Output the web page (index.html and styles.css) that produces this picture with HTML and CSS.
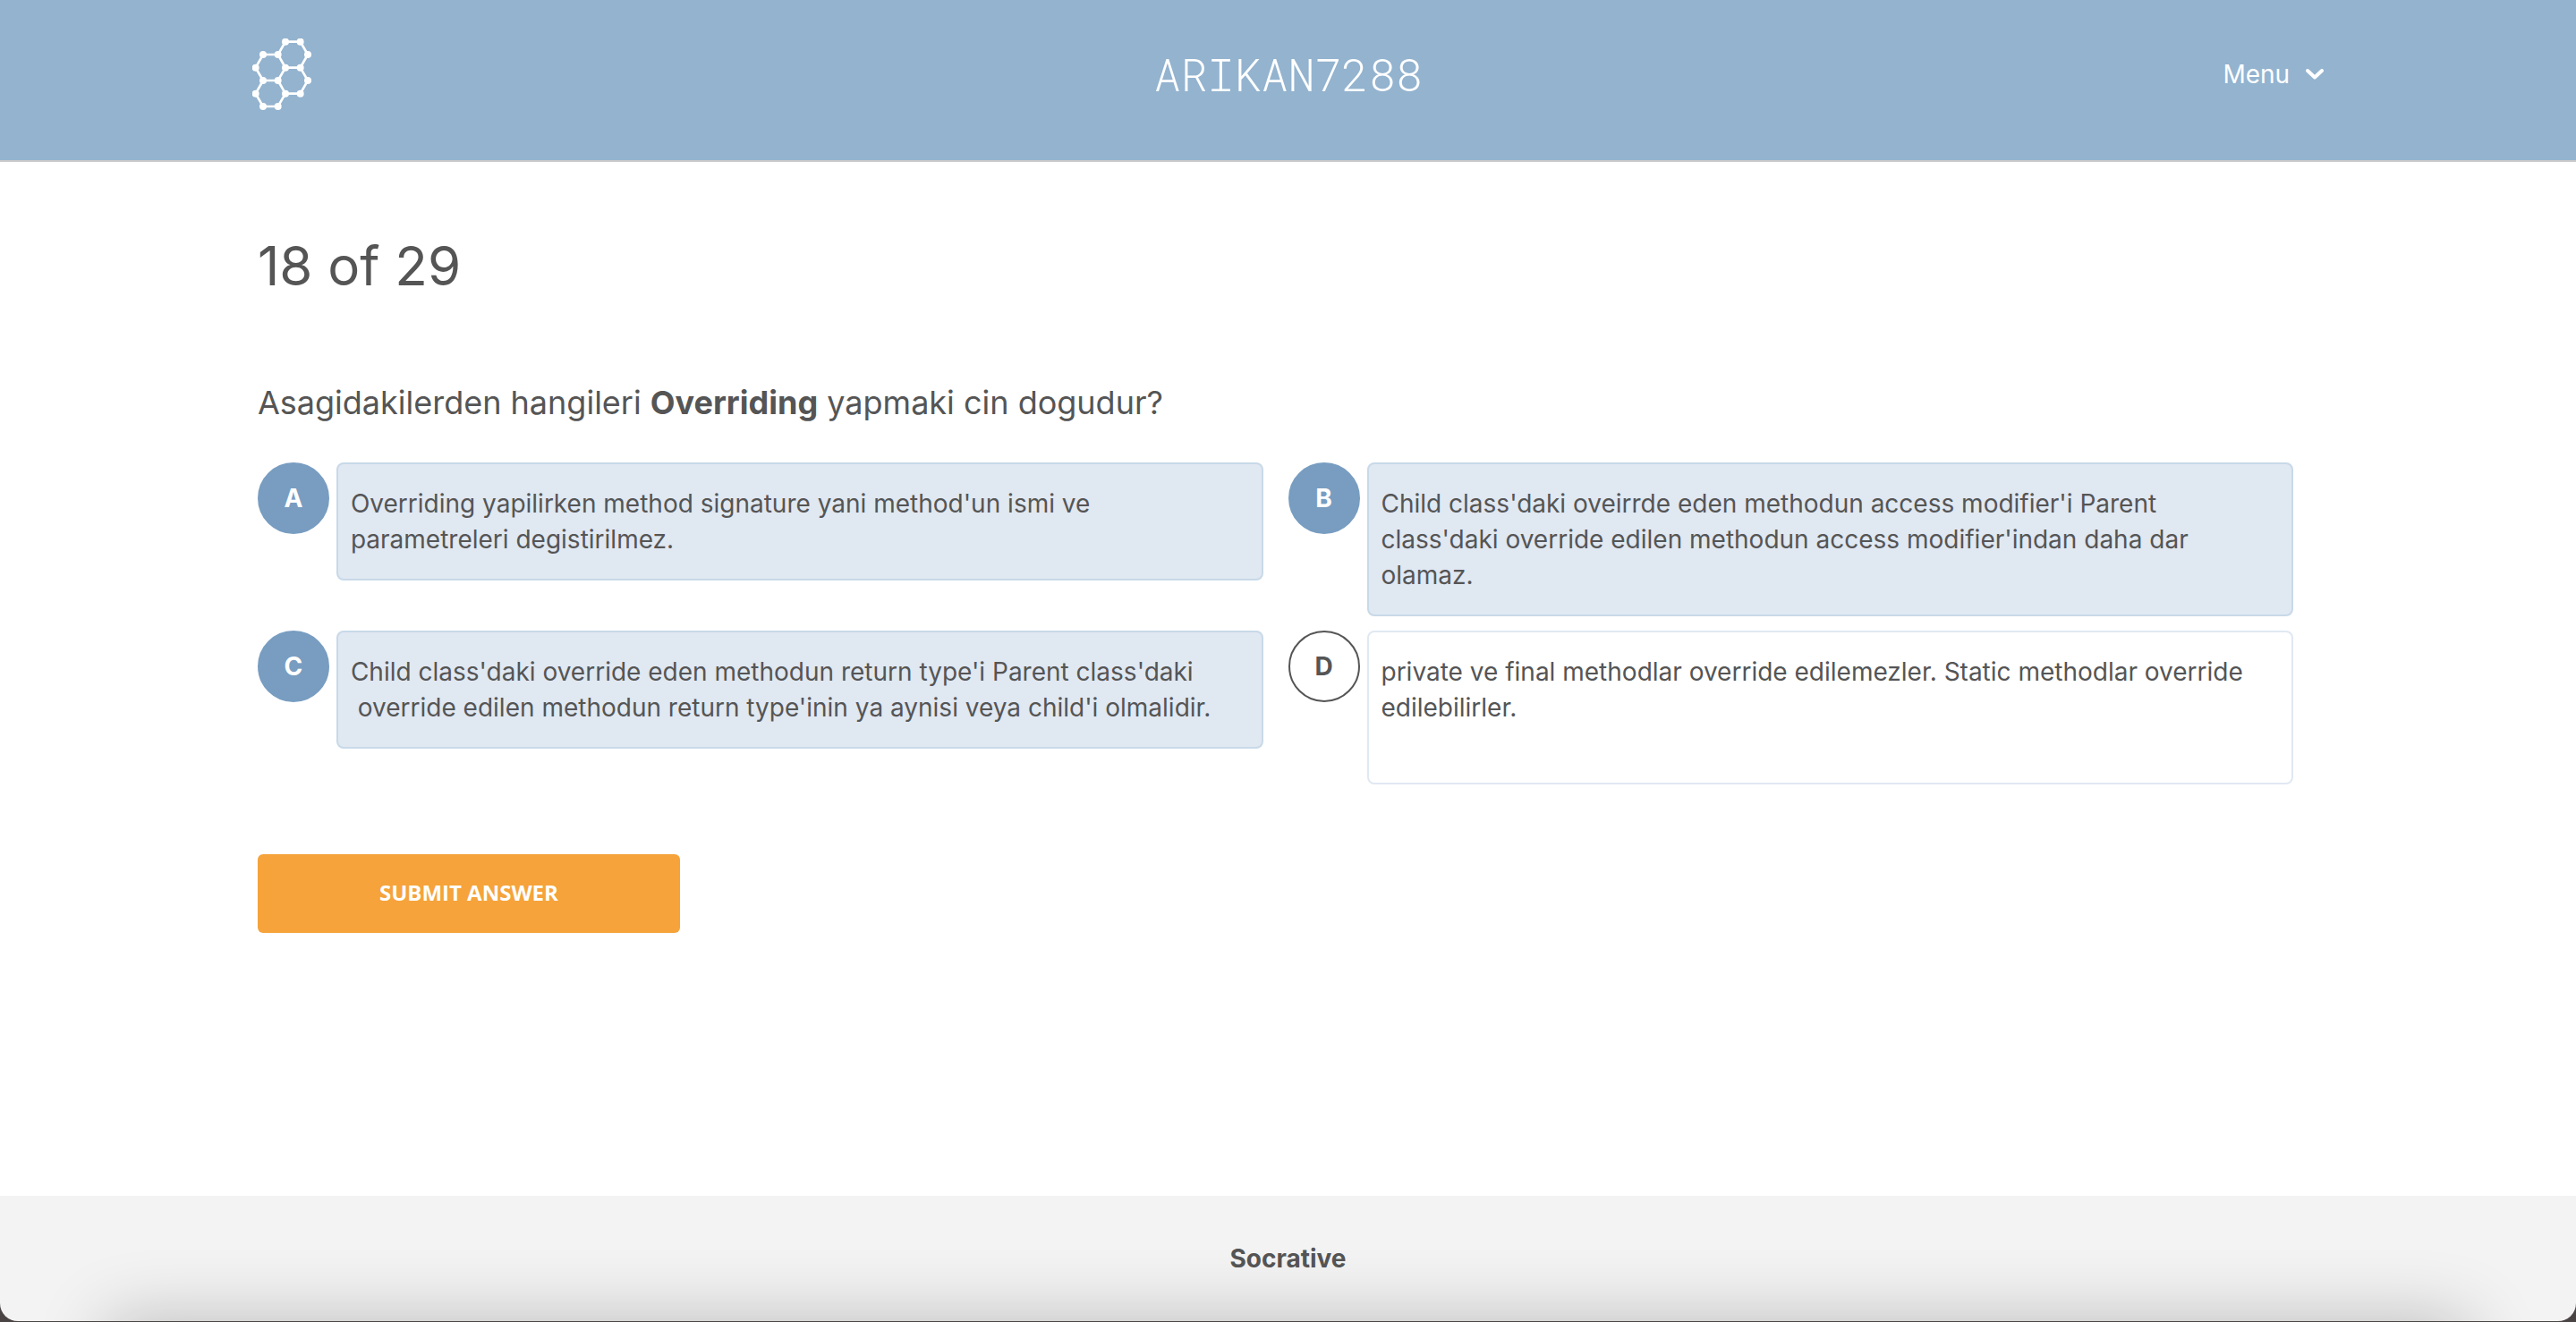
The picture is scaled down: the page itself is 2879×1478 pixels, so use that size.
FILE: index.html
```html
<!DOCTYPE html>
<html lang="en">
<head>
<meta charset="utf-8">
<meta name="viewport" content="width=device-width, initial-scale=1">
<title>Socrative</title>
<link rel="stylesheet" href="styles.css">
</head>
<body>
<div class="page">
  <header class="header">
    <a class="logo" href="#" aria-label="Socrative">
      <svg class="logo-mark" viewBox="66 69 198 240" aria-hidden="true">
        <path d="M177 80H227L252 123L227 167H177L152 123ZM102 123H152L177 167L152 210H102L77 167ZM227 167L252 210L227 254H177L152 210M177 254L152 297H102L77 254L102 210" fill="none" stroke="#fff" stroke-width="8"/>
        <g fill="#fff">
          <circle cx="177" cy="80" r="12"/><circle cx="227" cy="80" r="12"/>
          <circle cx="102" cy="123" r="12"/><circle cx="152" cy="123" r="12"/><circle cx="252" cy="123" r="12"/>
          <circle cx="77" cy="167" r="12"/><circle cx="177" cy="167" r="12"/><circle cx="227" cy="167" r="12"/>
          <circle cx="102" cy="210" r="12"/><circle cx="152" cy="210" r="12"/><circle cx="252" cy="210" r="12"/>
          <circle cx="77" cy="254" r="12"/><circle cx="177" cy="254" r="12"/><circle cx="227" cy="254" r="12"/>
          <circle cx="102" cy="297" r="12"/><circle cx="152" cy="297" r="12"/>
        </g>
      </svg>
    </a>
    <div class="room">ARIKAN7288</div>
    <button class="menu" type="button">Menu
      <svg class="chevron" viewBox="0 0 20 12" aria-hidden="true"><path d="M2 2L10 9.500L18 2" fill="none" stroke="#fff" stroke-width="4" stroke-linecap="round" stroke-linejoin="round"/></svg>
    </button>
  </header>

  <main class="main">
    <h1 class="progress">18 of 29</h1>
    <form class="quiz">
      <p class="question" id="question">Asagidakilerden hangileri <b>Overriding</b> yapmaki cin dogudur?</p>
      <div class="answers" role="group" aria-labelledby="question">
        <label class="answer">
          <input class="answer-check" type="checkbox" checked>
          <span class="answer-letter">A</span>
          <span class="answer-text">Overriding yapilirken method signature yani method'un ismi ve<br>parametreleri degistirilmez.</span>
        </label>
        <label class="answer">
          <input class="answer-check" type="checkbox" checked>
          <span class="answer-letter">B</span>
          <span class="answer-text">Child class'daki oveirrde eden methodun access modifier'i Parent<br>class'daki override edilen methodun access modifier'indan daha dar<br>olamaz.</span>
        </label>
        <label class="answer">
          <input class="answer-check" type="checkbox" checked>
          <span class="answer-letter">C</span>
          <span class="answer-text">Child class'daki override eden methodun return type'i Parent class'daki<br>&nbsp;override edilen methodun return type'inin ya aynisi veya child'i olmalidir.</span>
        </label>
        <label class="answer">
          <input class="answer-check" type="checkbox">
          <span class="answer-letter">D</span>
          <span class="answer-text">private ve final methodlar override edilemezler. Static methodlar override edilebilirler.<br><br></span>
        </label>
      </div>
      <button class="submit" type="button">SUBMIT ANSWER</button>
    </form>
  </main>

  <footer class="footer">Socrative</footer>
</div>
</body>
</html>
```
FILE: styles.css
```css
*,
*::before,
*::after {
  box-sizing: border-box;
}

body {
  margin: 0;
  background: #4b4444;
  color: #555;
  font-family: Inter, "Liberation Sans", sans-serif;
  font-size: 28px;
  line-height: 40px;
}

.page {
  display: flex;
  flex-direction: column;
  min-height: 100vh;
  padding-bottom: 1px;
}

.header {
  display: grid;
  grid-template-columns: 1fr auto 1fr;
  align-items: center;
  padding: 43px calc(10% - 6px) 56px;
  background: #93b3cf;
  border-bottom: 2px solid #c9c9c9;
  color: #fff;
}

.logo {
  justify-self: start;
}

.logo-mark {
  display: block;
  width: 66px;
  height: 80px;
}

.room {
  font-family: "Roboto Mono", "Liberation Mono", monospace;
  font-size: 50px;
  font-weight: 300;
}

.menu {
  display: flex;
  align-items: center;
  justify-self: end;
  gap: 18px;
  padding: 0;
  border: 0;
  background: none;
  color: inherit;
  font: inherit;
  cursor: pointer;
}

.chevron {
  width: 20px;
  height: 12px;
}

.main {
  flex: 1;
  padding: 76px 10% 64px;
  background: #fff;
}

.progress {
  margin: 0 0 89px;
  font-size: 60px;
  font-weight: 400;
  line-height: 80px;
}

.question {
  margin: 0 0 43px;
  font-size: 36px;
  line-height: 48px;
}

.answers {
  display: grid;
  grid-template-columns: 1fr 1fr;
  gap: 16px 28px;
  padding-right: 28px;
}

.answer {
  display: grid;
  grid-template-columns: 80px 1fr;
  column-gap: 8px;
  align-items: start;
  cursor: pointer;
}

.answer-check,
.answer-letter {
  grid-area: 1 / 1;
  width: 80px;
  height: 80px;
  margin: 0;
}

.answer-check {
  appearance: none;
  border: 2px solid #555;
  border-radius: 50%;
  background: #fff;
}

.answer-letter {
  z-index: 1;
  font-weight: 700;
  line-height: 80px;
  text-align: center;
}

.answer-text {
  padding: 24px 14px;
  border: 2px solid #e0e8f2;
  border-radius: 8px;
}

.answer-check:checked {
  border-color: #789dc1;
  background: #789dc1;
}

.answer-check:checked ~ .answer-letter {
  color: #fff;
}

.answer-check:checked ~ .answer-text {
  border-color: #c8d9e8;
  background: #e0e8f2;
}

.submit {
  display: block;
  width: 472px;
  height: 88px;
  margin-top: 78px;
  padding: 0 0 4px;
  border: 0;
  border-radius: 6px;
  background: #f5a33a;
  color: #fff;
  font-family: "Open Sans", "Noto Sans", sans-serif;
  font-size: 24px;
  font-weight: 700;
  cursor: pointer;
}

.footer {
  position: relative;
  overflow: hidden;
  padding: 50px 0;
  border-radius: 0 0 20px 20px;
  background: #f3f3f3;
  font-weight: 700;
  text-align: center;
}

.footer::after {
  content: "";
  position: absolute;
  top: 100%;
  left: 120px;
  right: 120px;
  height: 160px;
  box-shadow: 0 0 80px rgba(0, 0, 0, 0.24);
}
```
